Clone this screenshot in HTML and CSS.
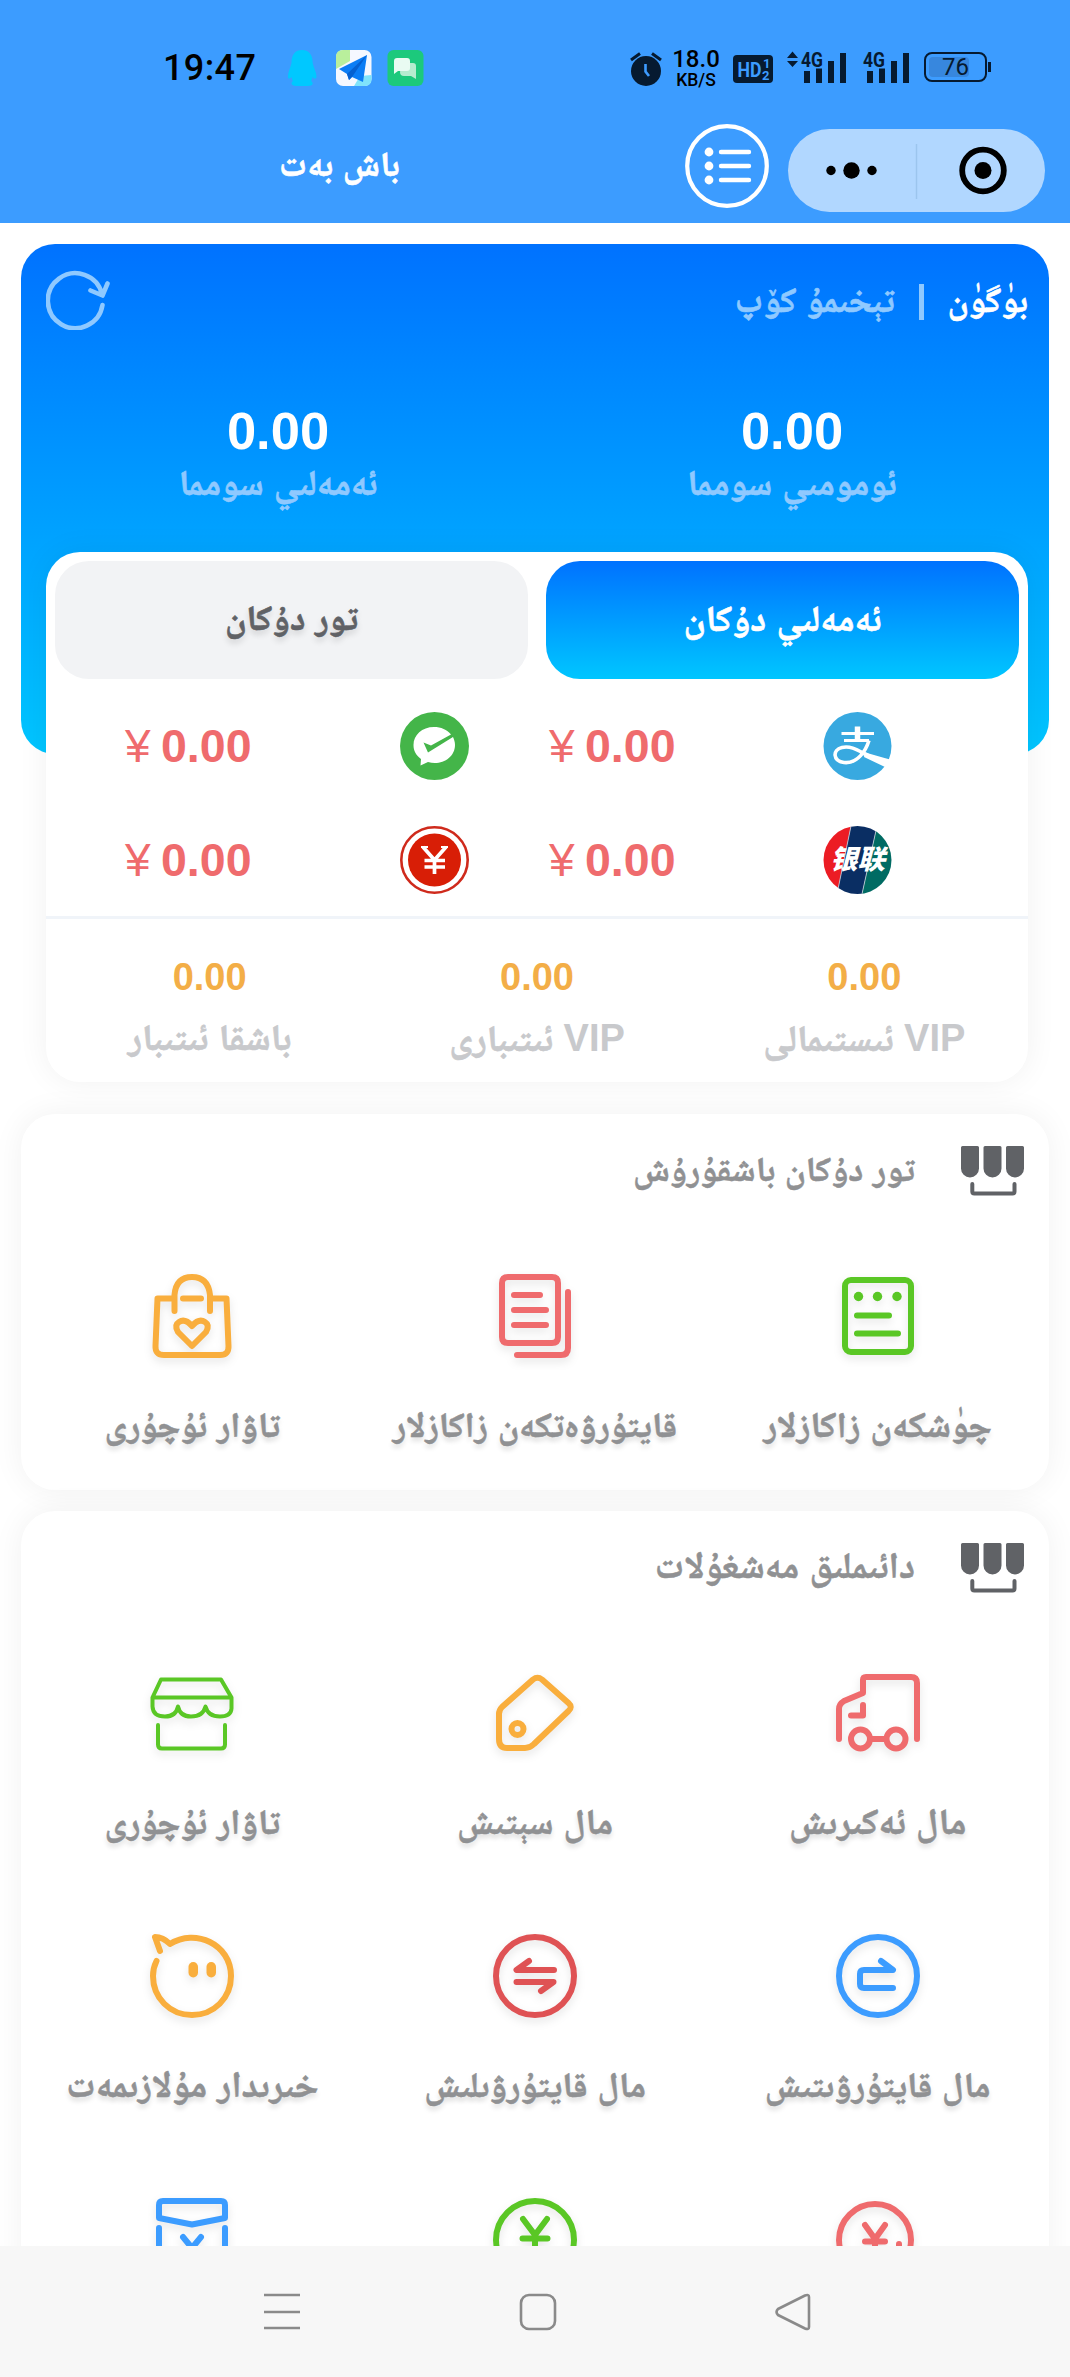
FILE: index.html
```html
<!DOCTYPE html>
<html lang="ug">
<head>
<meta charset="utf-8">
<title>باش بەت</title>
<link rel="stylesheet" href="styles.css">
</head>
<body>
<svg class="defs" aria-hidden="true">
  <symbol id="shop" viewBox="0 0 63 50">
    <path fill="#606266" d="M1.500 0H16.500Q18 0 18 1.500V22.500A9 9 0 0 1 0 22.500V1.500Q0 0 1.500 0ZM24 0H39Q40.500 0 40.500 1.500V22.500A9 9 0 0 1 22.500 22.500V1.500Q22.500 0 24 0ZM46.500 0H61.500Q63 0 63 1.500V22.500A9 9 0 0 1 45 22.500V1.500Q45 0 46.500 0Z"/>
    <path fill="none" stroke="#606266" stroke-width="4" stroke-linecap="round" d="M11.300 38V45.500Q11.300 47.500 13.300 47.500H51.500Q53.500 47.500 53.500 45.500V38"/>
  </symbol>
</svg>
<header class="header">
  <div class="status">
    <span class="clock">19:47</span>
    <svg class="apps" viewBox="0 0 136 36">
      <path fill="#00c8ff" d="M14 0C6 0 3.500 6 3.500 13C2 19 0 22 0 27C0 29 2 29 3.500 27Q4 30 5 31C2 33 4 36 8 36H20C25 36 26 33 23 31Q24 30 24.500 27C26 29 28.500 29 28.500 27C28.500 22 26 19 24.700 13C24.700 6 22 0 14 0Z"/>
      <rect x="48" width="35.500" height="36" rx="7" fill="#f5f8ff"/>
      <path fill="#b9ef9c" d="M55 0H62V11L48 19V7Q48 0 55 0Z"/>
      <path fill="#7fe3fb" d="M72 26L83.500 25V29Q83.500 36 77 36H66Z"/>
      <path fill="#0b7df5" d="M79 5L51 19L59 24L61 30L64 27L75 32Z"/>
      <path fill="#0560d0" d="M79 5L59 24L61 30L64 27Z"/>
      <rect x="99.500" width="36" height="36" rx="6" fill="#1cc97c"/>
      <path fill="#b5eccf" d="M114 13H125Q128 13 128 16V29L123 26H116Q112 26 112 22Z"/>
      <path fill="#e9fbf2" d="M109 8H119Q122 8 122 11V18Q122 21 119 21H110L106 24V11Q106 8 109 8Z"/>
    </svg>
    <svg class="alarm" viewBox="0 0 32 34"><circle cx="16" cy="19" r="15" fill="#061a30"/><path fill="none" stroke="#061a30" stroke-width="3" d="M1 8L10 1.500M22 1.500L31 8"/><path fill="none" stroke="#3d9bff" stroke-width="2.600" d="M15.500 12V19.500L19 24"/></svg>
    <div class="speed"><span>18.0</span><small>KB/S</small></div>
    <svg class="hd" viewBox="0 0 40 28"><rect width="40" height="28" rx="4" fill="#061a30"/><g fill="#3c9cff"><text class="hd-big" x="4.500" y="22" textLength="24" lengthAdjust="spacingAndGlyphs">HD</text><text class="hd-small" x="30" y="13">1</text><text class="hd-small" x="29" y="25">2</text></g></svg>
    <svg class="signal" viewBox="0 0 122 36">
      <g fill="#061a30"><path d="M0 9L5.500 2.500L11 9ZM0 12L5.500 18L11 12Z"/>
      <path d="M17 22h6v12h-6zM29 19.500h6v14.500h-6zM41 12h6v22h-6zM53 4h6v30h-6zM80 22h6v12h-6zM92 19.500h6v14.500h-6zM104 12h6v22h-6zM116 4h6v30h-6z"/>
      <text x="14" y="17.500" textLength="22" lengthAdjust="spacingAndGlyphs">4G</text><text x="76" y="17.500" textLength="22" lengthAdjust="spacingAndGlyphs">4G</text></g>
    </svg>
    <div class="battery"><i></i><span>76</span></div>
  </div>
  <div class="titlebar">
    <h1>باش بەت</h1>
    <svg class="list" viewBox="0 0 84 84"><circle cx="42" cy="42" r="39.800" fill="none" stroke="#fff" stroke-width="4.200"/><g fill="#fff"><circle cx="24" cy="28" r="4.400"/><circle cx="24" cy="42" r="4.400"/><circle cx="24" cy="56" r="4.400"/></g><path stroke="#fff" stroke-width="4.400" stroke-linecap="round" d="M36 28H64M36 42H64M36 56H64"/></svg>
    <div class="capsule"><svg viewBox="0 0 257 83"><circle cx="43" cy="41.500" r="4.700"/><circle cx="63.500" cy="41.500" r="8.200"/><circle cx="84" cy="41.500" r="4.700"/><path stroke="#9cc5ee" stroke-width="1.500" d="M128.500 15V70"/><circle cx="195" cy="41.500" r="20.800" fill="none" stroke="#000" stroke-width="5.800"/><circle cx="195" cy="41.500" r="8.500"/></svg></div>
  </div>
</header>
<main>
  <section class="hero">
    <div class="hero-top">
      <svg class="refresh" viewBox="0 0 64 60"><path fill="none" stroke="#8fc9ff" stroke-width="4.600" stroke-linecap="round" stroke-linejoin="round" d="M56 24A27.500 27.500 0 1 0 56.500 35M44.500 20.500L56.500 25.500L61.500 13.500"/></svg>
      <div class="range" dir="rtl"><b>بۈگۈن</b><i></i><span>تېخىمۇ كۆپ</span></div>
    </div>
    <div class="totals">
      <div><strong>0.00</strong><span>ئەمەلىي سومما</span></div>
      <div><strong>0.00</strong><span>ئومومىي سومما</span></div>
    </div>
  </section>
  <section class="pay">
    <div class="tabs"><div class="tab">تور دۇكان</div><div class="tab active">ئەمەلىي دۇكان</div></div>
    <div class="channels">
      <p><span>¥</span>0.00</p>
      <svg viewBox="0 0 69 68"><ellipse cx="34.500" cy="34" rx="34.500" ry="34" fill="#44b549"/><path fill="#fff" d="M34 15C22 15 13.500 23 13.500 33C13.500 39 16 43 21 47L20.500 53.500L28 50C41 54 55 46 55 33C55 30 54 27 53 25L28 40.500L23.500 30.500L31 33.500L51 22.500C47 17.500 41 15 34 15Z"/></svg>
      <p><span>¥</span>0.00</p>
      <svg viewBox="0 0 69 68"><ellipse cx="34.500" cy="34" rx="34" ry="34" fill="#38a9e0"/><path fill="none" stroke="#fff" stroke-width="3.200" d="M18.500 21.500H51M21 28.500H46"/><path fill="none" stroke="#fff" stroke-width="5.500" d="M34.500 14.500V29"/><path fill="none" stroke="#fff" stroke-width="3.600" stroke-linejoin="round" d="M46 28.500C43 38 35 52 21 50.500C10 49 9 38 19 35.500C30 33 38 41 50 46"/><path fill="#fff" d="M42 40Q50 43 69 48L62 55L41 45Z"/></svg>
      <p><span>¥</span>0.00</p>
      <svg viewBox="0 0 69 68"><ellipse cx="34.500" cy="34" rx="33.200" ry="32.700" fill="#fff" stroke="#cf2a1c" stroke-width="2.600"/><circle cx="34.500" cy="34" r="26.500" fill="#d81e06"/><path fill="none" stroke="#fff" stroke-width="3.700" d="M23 21L34.500 34L46 21M34.500 33V48M24.500 34.500H45M24.500 41H45"/><path stroke="#fff" stroke-width="2" d="M21 21H28M41 21H48"/></svg>
      <p><span>¥</span>0.00</p>
      <svg viewBox="0 0 69 68"><clipPath id="disc"><ellipse cx="34.500" cy="34" rx="34" ry="34"/></clipPath><g clip-path="url(#disc)"><path fill="#ec1c24" d="M0 0H28L14 68H0Z"/><path fill="#0a2e63" d="M28 0H54L39 68H14Z"/><path fill="#006b63" d="M54 0H69V68H39Z"/><path stroke="#cad0dc" stroke-width=".8" d="M28 0L14 68M54 0L39 68"/></g><text class="union" x="7" y="43" textLength="55" lengthAdjust="spacingAndGlyphs">银联</text></svg>
    </div>
    <div class="stats">
      <div><strong>0.00</strong><span dir="rtl">باشقا ئىتىبار</span></div>
      <div><strong>0.00</strong><span dir="rtl"><em>VIP</em> ئىتىبارى</span></div>
      <div><strong>0.00</strong><span dir="rtl"><em>VIP</em> ئىستىمالى</span></div>
    </div>
  </section>
  <section class="panel web">
    <h2 dir="rtl"><svg class="shop"><use href="#shop"/></svg><span>تور دۇكان باشقۇرۇش</span></h2>
    <div class="grid">
      <div class="item"><svg viewBox="0 0 84 84" stroke="#f9ae3d"><path d="M22 24.500H7.500L5.500 72Q5 81 14 81H70Q79 81 78.500 72L76.500 24.500H62M24.500 37V21Q26 3 42 3Q58 3 60 21V37M33 24.500H51M42 72L28 58Q24 51 29 48Q35 44 42 52Q49 44 55 48Q60 51 56 58Z"/></svg><span>تاۋار ئۇچۇرى</span></div>
      <div class="item"><svg viewBox="0 0 84 84" stroke="#ef6b6d"><path d="M15 3H59Q65 3 65 9V63Q65 69 59 69H15Q9 69 9 63V9Q9 3 15 3ZM21 21H47M21 36H53M21 51H53M75 18V74Q75 81 68 81H24"/></svg><span>قايتۇرۋەتكەن زاكازلار</span></div>
      <div class="item"><svg viewBox="0 0 84 84" stroke="#5ac725"><rect x="9" y="6" width="66" height="72" rx="6"/><path d="M21 41.500H53M21 59.500H62"/><g fill="#5ac725" stroke="none"><circle cx="22.500" cy="22.500" r="4.700"/><circle cx="41.500" cy="22.500" r="4.700"/><circle cx="61" cy="22.500" r="4.700"/></g></svg><span class="w2">چۈشكەن زاكازلار</span></div>
    </div>
  </section>
  <section class="panel daily">
    <h2 dir="rtl"><svg class="shop"><use href="#shop"/></svg><span>دائىملىق مەشغۇلات</span></h2>
    <div class="grid">
      <div class="item"><svg viewBox="0 0 84 84" stroke="#5ac725" stroke-width="4"><path d="M11 8.500H71L81.500 26.500V37.500Q81 45.500 70 45.500Q58 45.500 55.500 35.500Q53 45.500 41 45.500Q30 45.500 28 35.500Q26 45.500 15 45.500Q3 45.500 2.500 35.500V26.500ZM2.500 26.500H81.500M8 54V73.500Q8 77.500 12 77.500H71Q75 77.500 75 73.500V54"/></svg><span>تاۋار ئۇچۇرى</span></div>
      <div class="item"><svg viewBox="0 0 84 84" stroke="#f9ae3d"><path d="M6 43Q6 39 9 36L40 8.500Q44.500 5 49 8.500L75.500 32Q80 36 75.500 40L41 73Q37 77 32 77H14Q6 77 6 68Z"/><circle cx="24.500" cy="58" r="6"/></svg><span class="w2">مال سېتىش</span></div>
      <div class="item"><svg viewBox="0 0 84 84" stroke="#ef6b6d"><g transform="translate(0 1)"><path d="M3 67V37Q3 32 8 29L27 21V8Q27 5 30 5H75Q81 5 81 11V67M27 33V43.500H15M36 67H48"/><circle cx="24.500" cy="67" r="9.500"/><circle cx="60" cy="67" r="9.500"/></g></svg><span class="w3">مال ئەكىرىش</span></div>
      <div class="item"><svg viewBox="0 0 84 84" stroke="#f9ae3d"><path d="M10 17L5 3Q13 3 20 10C45 -6 81 10 81 42C81 64 64 81 42 81C20 81 3 64 3 42Q3 34 6.500 27"/><g fill="#f9ae3d" stroke="none"><rect x="38.500" y="28" width="9.500" height="15.500" rx="4.700"/><rect x="56.500" y="28" width="9.500" height="15.500" rx="4.700"/></g></svg><span class="w3">خىرىدار مۇلازىمەت</span></div>
      <div class="item"><svg viewBox="0 0 84 84" stroke="#df5254"><circle cx="42" cy="42" r="39"/><path d="M36 27L23.500 36H61M23.500 48H60.500L48 57"/></svg><span>مال قايتۇرۋىلىش</span></div>
      <div class="item"><svg viewBox="0 0 84 84" stroke="#3c9cff"><circle cx="42" cy="42" r="39"/><path d="M45 27L57 36H28Q24 36 24 40V50Q24 54 28 54H57"/></svg><span>مال قايتۇرۋىتىش</span></div>
      <div class="item"><svg viewBox="0 0 84 84" stroke="#3c9cff"><path d="M13 4H71Q75 4 75 8V21L42 27.500L9 21V8Q9 4 13 4ZM9 31V84M75 31V84M33 40L42 51L51 40M42 51V66"/></svg></div>
      <div class="item"><svg viewBox="0 0 84 84" stroke="#5ac725"><circle cx="42" cy="43" r="39"/><path d="M30 22L42 38L54 22M29.500 41.500H54.500M42 39V63"/></svg></div>
      <div class="item"><svg viewBox="0 0 84 84" stroke="#ef6b6d"><circle cx="39" cy="43" r="36"/><path d="M29 28L39 42L49 28M29 44.500H49M39 42V63M63 47V61"/></svg></div>
    </div>
  </section>
</main>
<nav class="nav"><svg viewBox="0 0 550 40"><g fill="none" stroke="#8a8a8a" stroke-width="2.600"><path d="M1 4H37M1 21H37M1 37H37"/><rect x="258" y="4" width="34" height="34" rx="8"/><path stroke-linejoin="round" d="M515 18Q512 21 515 24L542 37.500Q546 39 546 36V6Q546 3 542 4.500Z"/></g></svg></nav>
</body>
</html>
```
FILE: styles.css
```css
* { box-sizing: border-box; }
body { margin: 0; width: 1070px; height: 2377px; overflow: hidden; display: flex; flex-direction: column; background: #fff; font-family: "Liberation Sans", "Noto Naskh Arabic", "DejaVu Sans", sans-serif; }
h1, h2, p { margin: 0; }
svg { display: block; flex: none; }
i, em { font-style: normal; }
.defs { display: none; }

.header { flex: none; height: 223px; background: #3c9cff; }
.status { height: 124px; padding: 50px 0 0 163px; display: flex; align-items: flex-start; font-family: Roboto, sans-serif; color: #000; }
.clock { width: 125px; font-size: 36px; line-height: 37px; font-weight: 500; letter-spacing: .4px; }
.apps { width: 136px; height: 36px; }
.alarm { width: 32px; height: 34px; margin: 2px 0 0 206px; }
.speed { width: 52px; margin-left: 8px; display: flex; flex-direction: column; align-items: center; font-weight: 500; }
.speed span { font-size: 24px; line-height: 19px; }
.speed small { font-size: 17.5px; line-height: 23px; }
.hd { width: 40px; height: 28px; margin: 5px 0 0 11px; }
.hd-big { font: 700 21px Roboto, sans-serif; }
.hd-small { font: 700 13px Roboto, sans-serif; }
.signal { width: 122px; height: 36px; margin: -1px 0 0 14px; overflow: visible; }
.signal text { font: 700 20px Roboto, sans-serif; }
.battery { position: relative; width: 63px; height: 30px; margin: 2px 0 0 15px; border: 2px solid #061a30; border-radius: 8px; display: flex; align-items: center; justify-content: center; font-size: 24px; color: #061a30; }
.battery i { position: absolute; left: 3px; top: 3px; width: 40px; height: 20px; border-radius: 4px; background: #3787de; }
.battery::after { content: ""; position: absolute; left: 62px; top: 8px; width: 3px; height: 10px; background: #061a30; }
.battery span { position: relative; }
.titlebar { display: flex; padding-left: 279px; }
.titlebar h1 { width: 406px; font-size: 35px; line-height: 80px; color: #fff; white-space: nowrap; -webkit-text-stroke: .6px; }
.list { width: 84px; height: 84px; }
.capsule { width: 257px; height: 83px; margin: 5px 0 0 19px; border-radius: 42px; background: #b1d7ff; }

main { flex: none; height: 2023px; padding: 21px 21px 0; overflow: hidden; }
.hero { height: 510px; padding: 23px 21px 0 25px; border-radius: 34px; background: linear-gradient(#0072ff, #00c6ff); color: #fff; }
.hero-top { height: 134px; display: flex; justify-content: space-between; }
.refresh { width: 64px; height: 60px; margin-top: 3px; }
.range { height: 70px; display: flex; align-items: center; font-size: 35.5px; font-weight: 700; color: #8fc9ff; -webkit-text-stroke: .6px; }
.range b, .range span { line-height: 60px; margin-top: -4px; }
.range b { color: #fff; font-size: 35px; }
.range i { width: 5px; height: 36px; margin: 0 24px; background: #8fc9ff; }
.totals { display: grid; grid-template-columns: 1fr 1fr; margin: 0 -21px 0 -25px; text-align: center; }
.totals strong { display: block; font-size: 52.500px; line-height: 60px; }
.totals span { display: block; font-size: 36px; line-height: 44px; font-weight: 700; color: #8fc9ff; white-space: nowrap; -webkit-text-stroke: .6px; }

.pay { position: relative; height: 530px; margin: -202px 21px 0 25px; border-radius: 34px; background: #fff; box-shadow: 0 0 32px rgba(0, 0, 0, .06); }
.tabs { display: grid; grid-template-columns: 1fr 1fr; gap: 18px; padding: 9px; }
.tab { height: 118px; border-radius: 34px; background: #f2f3f5; color: #606266; font-size: 35.5px; line-height: 115px; font-weight: 700; text-align: center; text-shadow: 0 4px 6px rgba(0, 0, 0, .15); -webkit-text-stroke: .6px; }
.active { background: linear-gradient(#0072ff, #00c6ff); color: #fff; font-size: 36.5px; text-shadow: none; }
.channels { height: 230px; padding: 1px 0 0 79px; display: grid; grid-template-columns: 275px 149px 274px 80px; grid-auto-rows: 114px; align-items: center; color: #ef6b6d; }
.channels p { font-size: 46.500px; font-weight: 700; line-height: 60px; display: flex; }
.channels p span { width: 36px; font-weight: 400; font-size: 46px; }
.channels svg { width: 69px; height: 68px; }
.union { font: italic 900 27px "Noto Sans CJK SC", sans-serif; fill: #fff; }
.stats { border-top: 3px solid #f0f4f9; display: grid; grid-template-columns: repeat(3, 1fr); margin-top: -2px; padding-top: 34px; text-align: center; }
.stats strong { display: block; color: #f3ae47; font-size: 38px; line-height: 48px; }
.stats span { display: block; color: #c8c9cc; font-size: 37px; line-height: 74px; font-weight: 700; white-space: nowrap; -webkit-text-stroke: .6px; }
.stats em { font-size: 38px; -webkit-text-stroke: 0; }

.panel { border-radius: 34px; background: #fff; box-shadow: 0 0 32px rgba(0, 0, 0, .06); color: #909193; position: relative; }
.web { height: 376px; margin-top: 32px; }
.daily { height: 900px; margin-top: 21px; }
.panel h2 { height: 157px; padding: 32px 25px 0; display: flex; align-items: flex-start; font-size: 34.7px; line-height: 46px; -webkit-text-stroke: .5px; }
.panel h2 span { margin-right: 46px; white-space: nowrap; }
.daily h2 span { font-size: 36.8px; }
.shop { width: 63px; height: 50px; }
.grid { display: grid; grid-template-columns: repeat(3, 1fr); grid-auto-rows: 263px; }
.item { display: flex; flex-direction: column; align-items: center; padding-top: 3px; }
.item svg { width: 84px; height: 84px; fill: none; stroke-width: 6; stroke-linecap: round; stroke-linejoin: round; overflow: visible; filter: drop-shadow(0 4px 4px rgba(0, 0, 0, .1)); }
.item svg[stroke-width] { stroke-width: 4; }
.item span { margin-top: 42px; font-size: 35.3px; line-height: 50px; font-weight: 700; white-space: nowrap; text-shadow: 0 4px 5px rgba(0, 0, 0, .13); -webkit-text-stroke: .5px; }
.item .w2 { font-size: 36px; }
.item .w3 { font-size: 36.7px; }
.nav { height: 131px; background: #f7f7f7; padding: 45px 0 0 263px; }
.nav svg { width: 550px; height: 40px; }
```
